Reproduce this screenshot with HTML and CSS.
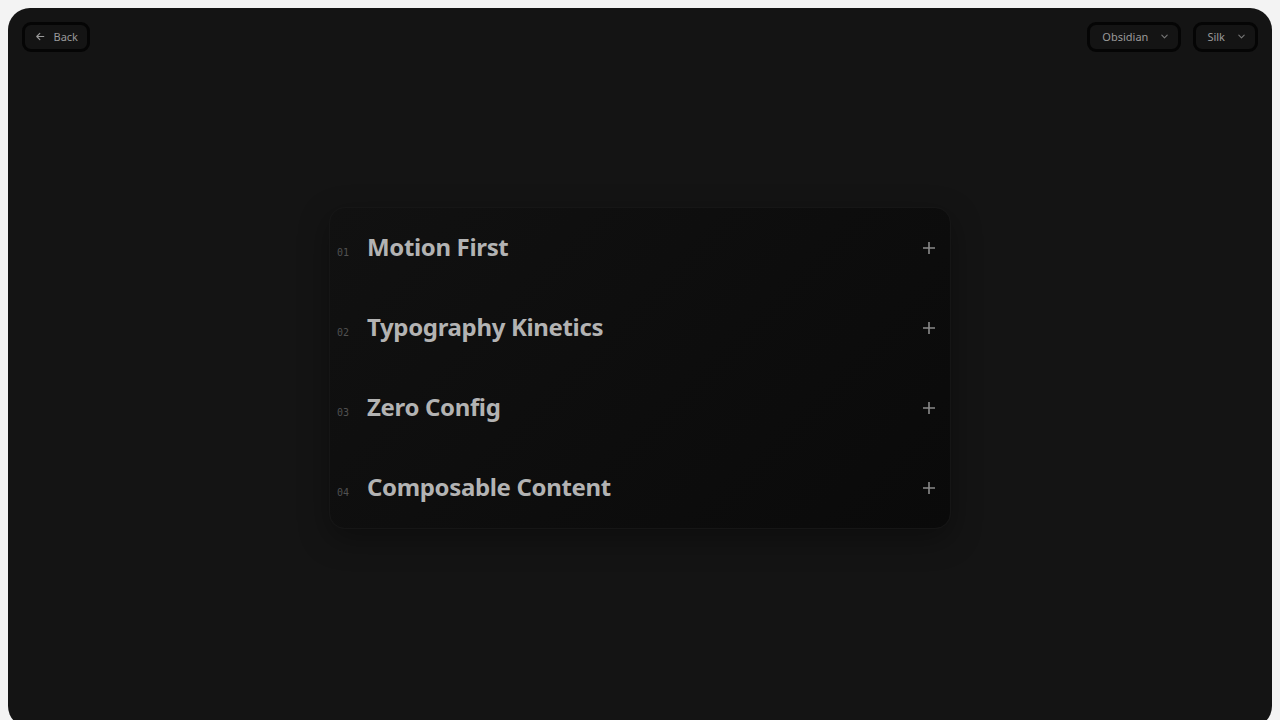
FILE: index.html
```html
<!DOCTYPE html>
<html>
<head>
    <meta charset="utf-8">
    <title>Accordion</title>
    <link rel="stylesheet" href="styles.css">
</head>
<body>
    <div class="stage">
        <!-- top bar -->
        <div class="topbar">
            <button class="chip back">
                <svg width="11" height="11" viewBox="0 0 12 12" fill="none" stroke="currentColor" stroke-width="1.3" stroke-linecap="round" stroke-linejoin="round"><path d="M10 6H2M5.5 2.5L2 6l3.5 3.5"/></svg>
                <span>Back</span>
            </button>
            <div class="pickers">
                <button class="chip picker">
                    <span>Obsidian</span>
                    <svg width="9" height="9" viewBox="0 0 10 10" fill="none" stroke="currentColor" stroke-width="1.2" stroke-linecap="round" stroke-linejoin="round"><path d="M2 3.5l3 3 3-3"/></svg>
                </button>
                <button class="chip picker">
                    <span>Silk</span>
                    <svg width="9" height="9" viewBox="0 0 10 10" fill="none" stroke="currentColor" stroke-width="1.2" stroke-linecap="round" stroke-linejoin="round"><path d="M2 3.5l3 3 3-3"/></svg>
                </button>
            </div>
        </div>

        <!-- accordion -->
        <div class="center">
            <div class="accordion">
                <div class="acc-row">
                    <span class="acc-num">01</span>
                    <span class="acc-title">Motion First</span>
                    <svg class="acc-plus" width="12" height="12" viewBox="0 0 12 12" stroke="currentColor" stroke-width="1.6"><path d="M6 0v12M0 6h12"/></svg>
                </div>
                <div class="acc-row">
                    <span class="acc-num">02</span>
                    <span class="acc-title">Typography Kinetics</span>
                    <svg class="acc-plus" width="12" height="12" viewBox="0 0 12 12" stroke="currentColor" stroke-width="1.6"><path d="M6 0v12M0 6h12"/></svg>
                </div>
                <div class="acc-row">
                    <span class="acc-num">03</span>
                    <span class="acc-title">Zero Config</span>
                    <svg class="acc-plus" width="12" height="12" viewBox="0 0 12 12" stroke="currentColor" stroke-width="1.6"><path d="M6 0v12M0 6h12"/></svg>
                </div>
                <div class="acc-row">
                    <span class="acc-num">04</span>
                    <span class="acc-title">Composable Content</span>
                    <svg class="acc-plus" width="12" height="12" viewBox="0 0 12 12" stroke="currentColor" stroke-width="1.6"><path d="M6 0v12M0 6h12"/></svg>
                </div>
            </div>
        </div>
    </div>
</body>
</html>
```

FILE: styles.css
```css
html, body {
    margin: 0;
    padding: 0;
}

body {
    background: #f3f3f3;
    padding: 8px;
    font-family: "Noto Sans", "Open Sans", sans-serif;
}

.stage {
    height: 720px;
    background: #141414;
    border-radius: 22px;
    display: flex;
    flex-direction: column;
    box-sizing: border-box;
}

.topbar {
    display: flex;
    justify-content: space-between;
    padding: 14px 14px 0 14px;
    height: 30px;
}

.pickers {
    display: flex;
    gap: 12px;
}

.chip {
    display: flex;
    align-items: center;
    height: 30px;
    box-sizing: border-box;
    background: #141414;
    border: 3px solid #050505;
    border-radius: 9px;
    color: #9a9a9a;
    font-family: "Noto Sans", sans-serif;
    font-size: 11px;
    line-height: 1;
    padding: 0 9px 1px 9px;
    cursor: pointer;
}

.back {
    gap: 8px;
    width: 68px;
    padding-left: 10px;
}

.picker {
    gap: 12px;
    padding: 0 9px 1px 12px;
}

.picker:last-child {
    padding-left: 11px;
}

.picker svg {
    color: #777;
}

.center {
    flex: 1;
    display: flex;
    align-items: center;
    justify-content: center;
    margin-top: -44px;
}

.accordion {
    width: 622px;
    box-sizing: border-box;
    border-radius: 16px;
    border: 1px solid #161616;
    background: linear-gradient(135deg, #111111 0%, #0d0d0d 55%, #0a0a0a 100%);
    box-shadow: 0 10px 30px rgba(0, 0, 0, 0.35);
}

.acc-row {
    height: 80px;
    display: flex;
    align-items: baseline;
    padding: 22px 15px 0 7px;
    box-sizing: border-box;
}

.acc-num {
    font-family: "DejaVu Sans Mono", monospace;
    font-size: 10px;
    color: #515151;
    width: 30px;
}

.acc-title {
    flex: 1;
    font-size: 24px;
    font-weight: 700;
    color: #b3b3b3;
    letter-spacing: -0.35px;
}

.acc-plus {
    color: #8a8a8a;
    align-self: flex-start;
    margin-top: 12px;
}
```
